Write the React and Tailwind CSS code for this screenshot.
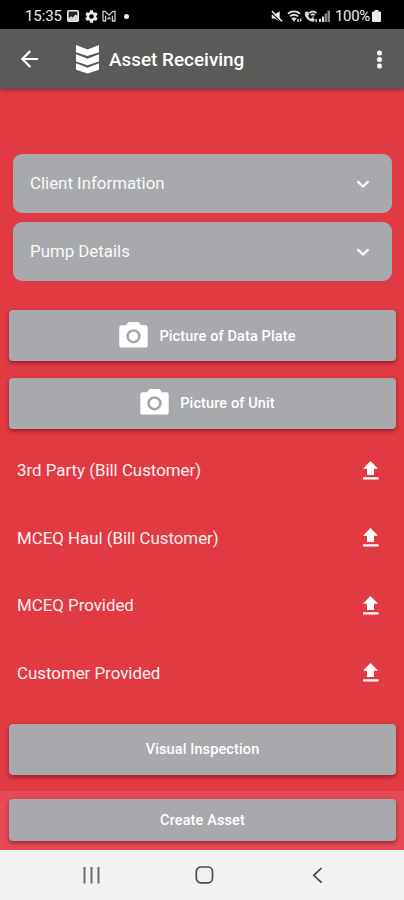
const roboto = "font-['Roboto',sans-serif]";

function StatusBar() {
  return (
    <div className="flex h-[29px] shrink-0 items-center justify-between bg-black pt-[3px] pr-[23px] pl-[25px] text-[#ececec]">
      <div className="flex items-center">
        <span className="w-[42px] text-[15px] leading-none tracking-[-0.1px] whitespace-nowrap">15:35</span>
        <svg className="h-3 w-3" viewBox="0 0 12 12">
          <rect x=".8" y=".8" width="10.4" height="10.4" rx="1" fill="#222" stroke="#ececec" strokeWidth="1.600" />
          <path d="M1 11V8.600L4 6.200l1.800 1.200 2.600-2.800L11 6v5z" fill="#d5d5d5" />
        </svg>
        <svg className="ml-[6px] h-[13px] w-[13px]" viewBox="2 2 20 20" fill="#ececec">
          <path d="M19.14 12.94c.04-.3.06-.61.06-.94 0-.32-.02-.64-.07-.94l2.03-1.58a.49.49 0 0 0 .12-.61l-1.92-3.32a.49.49 0 0 0-.59-.22l-2.39.96c-.5-.38-1.03-.7-1.62-.94l-.36-2.54a.48.48 0 0 0-.48-.41h-3.84a.47.47 0 0 0-.47.41l-.36 2.54c-.59.24-1.13.57-1.62.94l-2.39-.96a.48.48 0 0 0-.59.22L2.74 8.87a.47.47 0 0 0 .12.61l2.03 1.58c-.05.3-.09.63-.09.94s.02.64.07.94l-2.03 1.58a.49.49 0 0 0-.12.61l1.92 3.32c.12.22.37.29.59.22l2.39-.96c.5.38 1.03.7 1.62.94l.36 2.54c.05.24.24.41.48.41h3.84c.24 0 .44-.17.47-.41l.36-2.54c.59-.24 1.13-.56 1.62-.94l2.39.96c.22.08.47 0 .59-.22l1.92-3.32a.47.47 0 0 0-.12-.61zM12 15.6a3.6 3.6 0 1 1 0-7.2 3.6 3.6 0 0 1 0 7.2z" />
        </svg>
        <svg className="ml-[4px] h-3 w-[14px]" viewBox="0 0 14 12" fill="none" stroke="#cfcfcf" strokeWidth="1.300">
          <path d="M1 11V1.400h2L7 5.200l4-3.800h2V11h-2.600V5.800M1 11h2.600V5.800M5.500 9.200 7 7.600l1.500 1.600" />
        </svg>
        <span className="ml-[8px] h-[5px] w-[5px] rounded-full bg-[#ececec]" />
      </div>
      <div className="flex items-center">
        <svg className="mr-[1px] h-[13px] w-[12px]" viewBox="0 0 13 13">
          <path d="M.8 4.2h3L9.400.8v11L3.8 8.6h-3z" fill="#ececec" />
          <path d="m.6 2.600 10 10" stroke="#000" strokeWidth="1.200" />
          <path d="m1 .8 11 10.8" stroke="#ececec" strokeWidth="1.700" />
        </svg>
        <svg className="ml-[3px] h-[13px] w-[15px]" viewBox="0 0 15 13" fill="none" stroke="#dedede">
          <path d="M1 3.8C4.6.8 9.4.8 13 3.8M3 6.2c2.6-2 5.4-2 8 0" strokeWidth="1.900" />
          <path d="m4.6 8.4 2.4 2.8 2.4-2.8c-1.6-1-3.2-1-4.8 0z" fill="#dedede" strokeWidth=".6" />
          <path d="M11 9v3M13.6 8.500v3" strokeWidth="1.5" />
        </svg>
        <svg className="ml-[2px] h-[13px] w-[14px]" viewBox="0 0 14 13" fill="none" stroke="#dedede">
          <path d="M1.4 2.2C.8 7.4 4.6 11.4 9.8 11.2l.4-2.2-2.4-.8-1.2 1C5 8.2 4.2 7 3.8 5.6l1-1-.8-2.6z" fill="#dedede" strokeWidth=".9" />
          <path d="M5.4 3c2-1.8 4.8-1.8 7 0M7 5.2c1.2-1 2.6-1 3.8 0" strokeWidth="1.7" />
          <path d="M9 6.4v1.4" strokeWidth="1.4" />
          <path d="M12.2 9v3" strokeWidth="1.4" />
        </svg>
        <svg className="ml-[1px] h-3 w-[11px]" viewBox="0 0 11 12">
          <path d="M0 9h2v3H0zM3 6.6h2V12H3z" fill="#dedede" />
          <path d="M5.600 3.6h2.300V12H5.600zM8.500 .6H11V12H8.500z" fill="#8a8a8a" />
        </svg>
        <span className="ml-[5px] w-[37px] text-[15px] leading-none tracking-[-0.35px] whitespace-nowrap">100%</span>
        <svg className="h-3 w-[9px]" viewBox="0 0 9 12" fill="#ececec">
          <path d="M2.6 0h3.8v1.4H8a1 1 0 0 1 1 1V11a1 1 0 0 1-1 1H1a1 1 0 0 1-1-1V2.4a1 1 0 0 1 1-1h1.600z" />
        </svg>
      </div>
    </div>
  );
}

function AppBar() {
  return (
    <header className="z-10 flex h-[60px] shrink-0 items-center bg-[#5a5a59] pr-[13px] pl-[16px] text-white shadow-[0_1px_4px_rgba(0,0,0,0.35)]">
      <svg className="h-[26px] w-[27px]" viewBox="0 0 24 24" fill="white">
        <path d="M20 11H7.830l5.590-5.590L12 4l-8 8 8 8 1.410-1.410L7.830 13H20z" />
      </svg>
      <svg className="ml-[33px] h-[30px] w-[23px]" viewBox="0 0 23 30" fill="white">
        <path d="M0 1l11.500 4.500L23 1v7.200L11.500 12 0 8.200zM0 10.200l11.500 4.600L23 10.200v7.300L11.500 21.200 0 17.500zM0 19.200l11.500 4.600L23 19.200v6.500L11.500 29.600 0 25.700z" />
      </svg>
      <h1 className="ml-[10px] grow pt-[3px] text-[18.900px] font-medium whitespace-nowrap">Asset Receiving</h1>
      <svg className="h-[27px] w-6" viewBox="0 0 24 27" fill="white">
        <circle cx="12.500" cy="7" r="2.500" />
        <circle cx="12.500" cy="13.500" r="2.500" />
        <circle cx="12.500" cy="20" r="2.500" />
      </svg>
    </header>
  );
}

function Panel({ title }) {
  return (
    <div className="flex h-[59px] items-center justify-between rounded-[9px] bg-[#a7a9ac] pr-[22px] pl-[17px]">
      <span className="pt-px text-[16.850px] whitespace-nowrap text-[#fafafa]">{title}</span>
      <svg className="h-[14px] w-[14px]" viewBox="0 0 14 14" fill="none" stroke="white" strokeWidth="2.200">
        <path d="m1.500 4.200 5.500 5.300 5.500-5.300" />
      </svg>
    </div>
  );
}

function Camera() {
  return (
    <svg className="mr-[11px] mb-[2px] h-[26px] w-[29px]" viewBox="0 0 29 26">
      <path d="M9.500 0h10l2.400 3.200h4.600A2.200 2.200 0 0 1 28.700 5.400v18a2.200 2.200 0 0 1-2.200 2.200h-24A2.200 2.200 0 0 1 .3 23.400v-18a2.200 2.200 0 0 1 2.200-2.200h4.600z" fill="white" />
      <circle cx="14.500" cy="14.300" r="5.900" fill="none" stroke="#a3a5a8" strokeWidth="2.500" />
    </svg>
  );
}

function Button({ children, camera, height = "h-[51px]" }) {
  return (
    <button className={`${height} ${camera ? "pl-[10px]" : ""} flex w-full items-center justify-center rounded-[4px] bg-[#a7a9ac] text-[14.500px] font-medium tracking-[0.120px] whitespace-nowrap text-white shadow-[0_2px_4px_rgba(70,0,10,0.500)]`}>
      {camera && <Camera />}
      <span className="pt-[2px]">{children}</span>
    </button>
  );
}

function UploadRow({ label }) {
  return (
    <div className="flex h-[67.500px] items-center justify-between pr-[17px] pl-[8px]">
      <span className="pt-px text-[16.850px] whitespace-nowrap text-[#fff0f0]">{label}</span>
      <svg className="h-[19px] w-[17px]" viewBox="0 0 17 19" fill="white">
        <path d="M8.500 0 16 7.700h-4V14H5V7.700H1zM1 16.300h15.500v2.200H1z" />
      </svg>
    </div>
  );
}

export default function App() {
  return (
    <div className={`${roboto} flex h-[900px] w-[404px] flex-col overflow-hidden bg-[#e23a43]`}>
      <StatusBar />
      <AppBar />
      <main className="flex h-[702px] shrink-0 flex-col px-[9px] pt-[65px] pr-[8px]">
        <div className="flex flex-col gap-[9px] px-[4px]">
          <Panel title="Client Information" />
          <Panel title="Pump Details" />
        </div>
        <div className="mt-[29px] flex flex-col gap-[16.500px]">
          <Button camera>Picture of Data Plate</Button>
          <Button camera>Picture of Unit</Button>
        </div>
        <div className="mt-[8px] mb-[17px] flex flex-col">
          <UploadRow label="3rd Party (Bill Customer)" />
          <UploadRow label="MCEQ Haul (Bill Customer)" />
          <UploadRow label="MCEQ Provided" />
          <UploadRow label="Customer Provided" />
        </div>
        <Button>Visual Inspection</Button>
      </main>
      <footer className="h-[59px] shrink-0 bg-[#e64b55] pt-[8px] pr-[8px] pl-[9px]">
        <Button height="h-[42px]">Create Asset</Button>
      </footer>
      <nav className="flex h-[50px] shrink-0 items-center bg-[#f2f2f2] pl-[83px]">
        <svg className="h-[17px] w-[17px]" viewBox="0 0 17 17" stroke="#666" strokeWidth="1.900">
          <path d="M1.500 0v16.500M8.500 0v16.500M15.500 0v16.500" />
        </svg>
        <svg className="ml-[95px] h-[18px] w-[19px]" viewBox="0 0 19 18" fill="none" stroke="#4c4c4c" strokeWidth="1.700">
          <rect x="1.300" y="1" width="16.200" height="15.800" rx="4.500" />
        </svg>
        <svg className="ml-[98px] h-[17px] w-[11px]" viewBox="0 0 11 17" fill="none" stroke="#444" strokeWidth="1.700">
          <path d="M9.500 1 1.800 8.300l7.700 7.400" />
        </svg>
      </nav>
    </div>
  );
}
